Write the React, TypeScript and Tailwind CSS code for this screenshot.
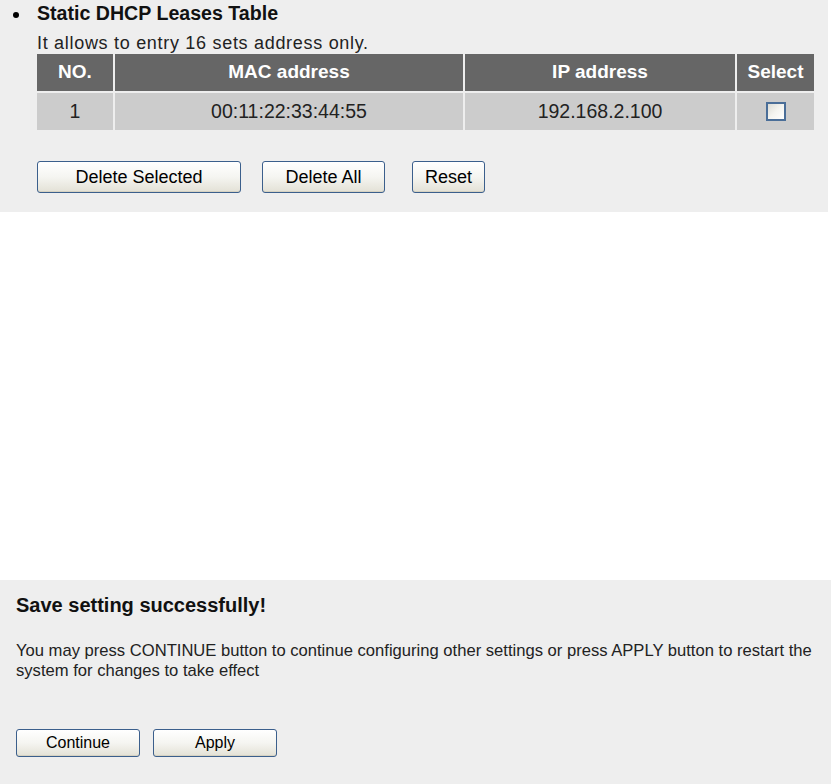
import React from "react";

const font = { fontFamily: '"Liberation Sans", Arial, sans-serif' };

function XpButton({ label, className }: { label: string; className: string }) {
  return (
    <button
      className={
        "rounded-[3px] border border-[#3b5f8c] bg-gradient-to-b from-[#ffffff] via-[#f5f5f1] to-[#e3e1d6] text-black shadow-[inset_0_-1px_0_#d6d2c2] " +
        className
      }
    >
      {label}
    </button>
  );
}

export default function App() {
  return (
    <div className="flex h-[784px] w-[831px] flex-col bg-white" style={font}>
      <section className="h-[212px] w-[828px] bg-[#eeeeee] pl-[37px] pt-[3px]">
        <div className="relative h-[23px]">
          <span className="absolute left-[-24px] top-[9px] h-[6px] w-[6px] rounded-full bg-black" />
          <h2 className="pt-[1px] text-[19.6px] font-bold leading-none text-[#111]">Static DHCP Leases Table</h2>
        </div>
        <p className="flex h-[28px] items-end pb-[2px] text-[18px] leading-none tracking-[0.7px] text-[#222]">
          It allows to entry 16 sets address only.
        </p>
        <div className="grid grid-cols-[76px_348px_270px_77px] gap-[2px]">
          <div className="flex h-[37px] items-center justify-center bg-[#666666] text-[19px] font-bold text-white">NO.</div>
          <div className="flex h-[37px] items-center justify-center bg-[#666666] text-[19px] font-bold text-white">MAC address</div>
          <div className="flex h-[37px] items-center justify-center bg-[#666666] text-[19px] font-bold text-white">IP address</div>
          <div className="flex h-[37px] items-center justify-center bg-[#666666] text-[19px] font-bold text-white">Select</div>
          <div className="flex h-[37px] items-center justify-center bg-[#cccccc] text-[19.5px] text-[#222]">1</div>
          <div className="flex h-[37px] items-center justify-center bg-[#cccccc] text-[19.5px] text-[#222]">00:11:22:33:44:55</div>
          <div className="flex h-[37px] items-center justify-center bg-[#cccccc] text-[19.5px] text-[#222]">192.168.2.100</div>
          <div className="flex h-[37px] items-center justify-center bg-[#cccccc]">
            <span className="h-[19px] w-[20px] border-2 border-[#4a6e98] bg-gradient-to-br from-[#dcdcd6] via-[#f4f4f0] to-white" />
          </div>
        </div>
        <div className="mt-[31px] flex items-center text-[18px]">
          <XpButton label="Delete Selected" className="h-[32px] w-[204px]" />
          <XpButton label="Delete All" className="ml-[21px] h-[32px] w-[123px]" />
          <XpButton label="Reset" className="ml-[27px] h-[32px] w-[73px]" />
        </div>
      </section>
      <div className="flex-1" />
      <section className="h-[204px] bg-[#eeeeee] px-4 pt-[11px]">
        <h3 className="text-[20px] font-bold leading-[28px] text-[#111]">Save setting successfully!</h3>
        <p className="mt-[22px] text-[16.6px] leading-[20px] text-[#222]">
          You may press CONTINUE button to continue configuring other settings or press APPLY button to restart the
          system for changes to take effect
        </p>
        <div className="mt-[48px] flex items-center gap-[13px] text-[16px]">
          <XpButton label="Continue" className="h-[28px] w-[124px]" />
          <XpButton label="Apply" className="h-[28px] w-[124px]" />
        </div>
      </section>
    </div>
  );
}
